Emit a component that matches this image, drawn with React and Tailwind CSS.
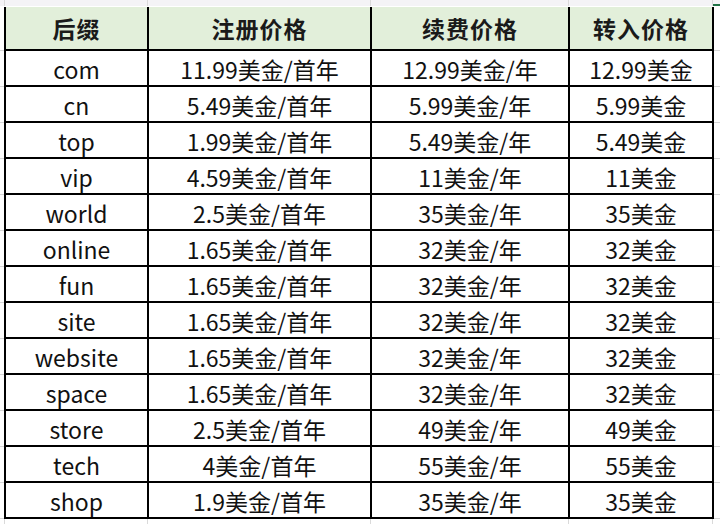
import React from "react";

const rows = [
  ["com", "11.99美金/首年", "12.99美金/年", "12.99美金"],
  ["cn", "5.49美金/首年", "5.99美金/年", "5.99美金"],
  ["top", "1.99美金/首年", "5.49美金/年", "5.49美金"],
  ["vip", "4.59美金/首年", "11美金/年", "11美金"],
  ["world", "2.5美金/首年", "35美金/年", "35美金"],
  ["online", "1.65美金/首年", "32美金/年", "32美金"],
  ["fun", "1.65美金/首年", "32美金/年", "32美金"],
  ["site", "1.65美金/首年", "32美金/年", "32美金"],
  ["website", "1.65美金/首年", "32美金/年", "32美金"],
  ["space", "1.65美金/首年", "32美金/年", "32美金"],
  ["store", "2.5美金/首年", "49美金/年", "49美金"],
  ["tech", "4美金/首年", "55美金/年", "55美金"],
  ["shop", "1.9美金/首年", "35美金/年", "35美金"],
];

const headers = ["后缀", "注册价格", "续费价格", "转入价格"];

const cols = "grid grid-cols-[143px_223px_198px_144px]";

// faint spreadsheet gridlines above / below the bordered table
const GridStrip = ({ className }) => (
  <div className={"flex " + className}>
    <div className="w-[5px] border-r border-[#dadada]" />
    <div className={cols + " flex-none"}>
      {headers.map((h) => (
        <div key={h} className="border-r border-[#dadada]" />
      ))}
    </div>
    <div className="flex-1" />
  </div>
);

const Gutter = ({ className }) => (
  <div className={"flex flex-col " + className}>
    <div className="h-[44px] border-b border-[#d6d6d6]" />
    {rows.map((r) => (
      <div key={r[0]} className="h-[36px] border-b border-[#d6d6d6]" />
    ))}
  </div>
);

export default function App() {
  return (
    <div
      className="w-[720px] h-[524px] bg-white overflow-hidden text-[#111] relative"
      style={{ fontFamily: '"Noto Sans CJK SC", "Noto Sans", sans-serif' }}
    >
      <GridStrip className="h-[6px] bg-[#f4f3f6]" />
      <div className="h-[1px] bg-white" />
      <div className="flex">
        <Gutter className="w-[4px]" />
        <div className="border-l-2 border-black">
          <div className={cols + " h-[44px] bg-[#e2efda]"}>
            {headers.map((h) => (
              <div
                key={h}
                className="flex items-center justify-center border-r-2 border-b-2 border-black font-bold text-[23px] tracking-[1px] text-[#1a1a1a]"
              >
                {h}
              </div>
            ))}
          </div>
          {rows.map((r) => (
            <div key={r[0]} className={cols + " h-[36px]"}>
              {r.map((c, i) => (
                <div
                  key={i}
                  className="flex items-center justify-center pt-[3px] border-r-2 border-b-2 border-black text-[23px] leading-none"
                >
                  {c}
                </div>
              ))}
            </div>
          ))}
        </div>
        <Gutter className="flex-1" />
      </div>
      <GridStrip className="h-[6px]" />
      <div className="absolute right-0 top-[4px] w-[7px] h-[2px] bg-[#217346]" />
    </div>
  );
}
